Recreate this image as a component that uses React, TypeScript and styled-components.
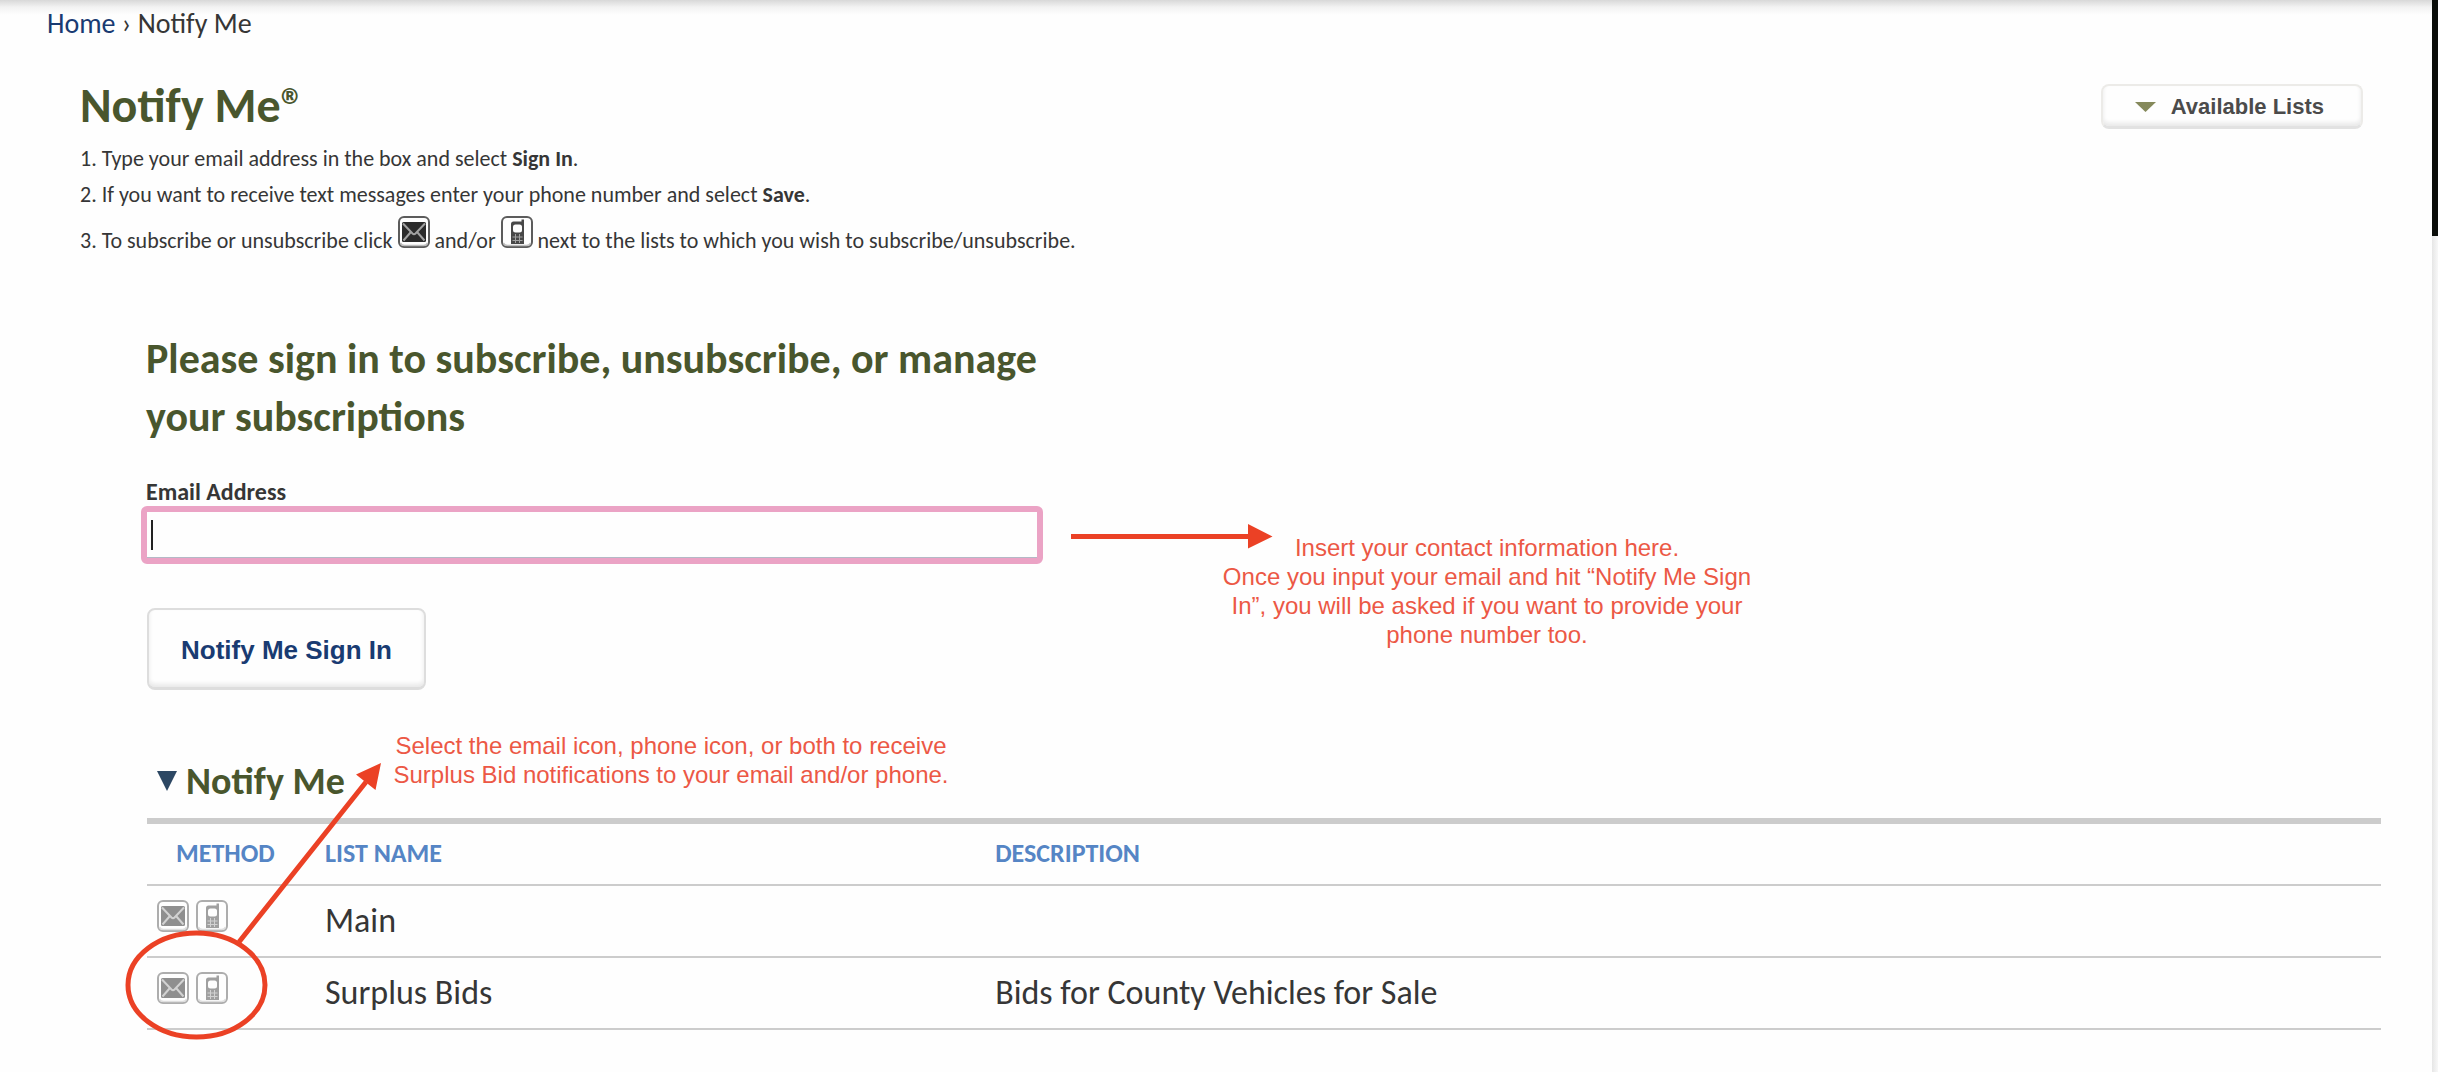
import React from "react";
import styled, { createGlobalStyle } from "styled-components";

const GlobalStyle = createGlobalStyle`
  *, *::before, *::after { box-sizing: border-box; }
  body {
    margin: 0;
    background: #fefefe;
    color: #363636;
    font-family: Carlito, Lato, sans-serif;
  }
  h1, h2, h3, p, ol { margin: 0; padding: 0; }
`;

const colors = {
  olive: "#49562d",
  navy: "#193b72",
  blue: "#5585c5",
  rule: "#cccccc",
  pink: "#eba3c5",
  arrow: "#eb4125",
  note: "#ec5845",
};

const Page = styled.div`
  display: flex;
  min-height: 100vh;
  position: relative;
  overflow: hidden;
`;

const Content = styled.div`
  flex: 1;
  min-width: 0;
  padding: 0 51px 40px 0;
  background: linear-gradient(#d8d8d8, #f2f2f2 7px, #fefefe 15px);
`;

const Edge = styled.div`
  width: 6px;
  display: flex;
  flex-direction: column;
  background: linear-gradient(90deg, #e6e6e6, #f8f8f8);
`;

const EdgePhoto = styled.div`
  height: 236px;
  background: #0a0d09;
`;

const Breadcrumb = styled.nav`
  padding: 9px 0 0 47px;
  font-size: 28px;
  line-height: 30px;
`;

const HomeLink = styled.a`
  color: ${colors.navy};
  text-decoration: none;
`;

const Intro = styled.header`
  display: flex;
  justify-content: space-between;
  align-items: flex-start;
  padding: 40px 18px 0 80px;
`;

const Title = styled.h1`
  color: ${colors.olive};
  font-size: 48px;
  line-height: 54px;
  margin-bottom: 8px;
`;

const Steps = styled.ol`
  list-style: none;
  font-size: 22px;
  line-height: 36px;
`;

const StepIcon = styled.svg`
  margin-top: 3px;
  vertical-align: baseline;
`;

const SoftButton = styled.button`
  border: 2px solid #dddddd;
  border-bottom-width: 3px;
  border-radius: 8px;
  background: #fefefe;
  box-shadow: inset 0 -3px 4px #e8e8e8;
  font-family: "Liberation Sans", Arial, sans-serif;
  font-weight: bold;
`;

const ListsButton = styled(SoftButton)`
  display: flex;
  align-items: center;
  gap: 15px;
  margin-top: 5px;
  padding: 2px 37px 0 32px;
  height: 45px;
  border-color: #ecebe8;
  border-bottom-color: #e2e2e2;
  color: #4b4b4b;
  font-size: 22px;
`;

const Main = styled.main`
  padding: 71px 0 0 147px;
`;

const SignIn = styled.form`
  width: 40%;
  min-width: 900px;
  margin-left: -1px;
`;

const FormTitle = styled.h2`
  color: ${colors.olive};
  font-size: 42px;
  line-height: 58px;
  margin-bottom: 32px;
`;

const Label = styled.label`
  display: block;
  font-size: 24px;
  font-weight: bold;
  line-height: 28px;
`;

const Field = styled.div`
  position: relative;
  margin: 0 0 44px -5px;
  height: 58px;
`;

const Input = styled.input`
  display: block;
  width: 902px;
  height: 58px;
  padding: 0 6px;
  border: 6px solid ${colors.pink};
  border-radius: 6px;
  outline: none;
  background: #fefefe;
  box-shadow: inset 0 -1px 0 #b4b9c6;
  font-size: 28px;
`;

const Caret = styled.span`
  position: absolute;
  left: 10px;
  top: 14px;
  width: 2px;
  height: 30px;
  background: #222222;
`;

const SignInButton = styled(SoftButton)`
  display: block;
  height: 82px;
  margin-left: 1px;
  padding: 4px 32px 0;
  color: ${colors.navy};
  font-size: 26px;
`;

const GroupTitle = styled.h3`
  display: flex;
  align-items: center;
  gap: 9px;
  margin: 69px 0 15px;
  padding-left: 10px;
  color: ${colors.olive};
  font-size: 38px;
  line-height: 44px;
`;

const Table = styled.table`
  width: 100%;
  table-layout: fixed;
  border-collapse: separate;
  border-spacing: 0;
  border-top: 6px solid ${colors.rule};
`;

const HeadCell = styled.th<{ $width: string; $indent?: number }>`
  width: ${(p) => p.$width};
  height: 62px;
  padding: 0 0 2px ${(p) => p.$indent ?? 0}px;
  border-bottom: 2px solid ${colors.rule};
  color: ${colors.blue};
  font-size: 26px;
  line-height: 30px;
  text-align: left;
  text-transform: uppercase;
`;

const Cell = styled.td`
  height: 72px;
  padding: 0;
  border-bottom: 2px solid ${colors.rule};
  font-size: 34px;
  line-height: 40px;
`;

const Methods = styled.div`
  display: flex;
  gap: 7px;
  padding: 0 0 10px 10px;
`;

const MethodButton = styled.button`
  display: block;
  width: 32px;
  height: 32px;
  padding: 0;
  border: 0;
  background: none;
`;

const Note = styled.p<{ $left: number; $top: number; $width: number }>`
  position: absolute;
  left: ${(p) => p.$left}px;
  top: ${(p) => p.$top}px;
  width: ${(p) => p.$width}px;
  color: ${colors.note};
  font-family: "Liberation Sans", Arial, sans-serif;
  font-size: 24px;
  line-height: 29px;
  text-align: center;
`;

const Marks = styled.svg`
  position: absolute;
  left: 0;
  top: 0;
  pointer-events: none;
`;

type IconTone = { frame: string; corner: string; fill: string; body: string; line: string };
const dark: IconTone = { frame: "#5c5c5c", corner: "#bdbdbd", fill: "#2b2b2b", body: "#484848", line: "#a2a2a2" };
const faded: IconTone = { frame: "#adadad", corner: "#dedede", fill: "#8f8f8f", body: "#a0a0a0", line: "#d2d2d2" };

function Frame({ tone }: { tone: IconTone }) {
  return (
    <>
      <rect x="1" y="1" width="30" height="30" rx="5" fill="#fefefe" stroke={tone.frame} strokeWidth="2" />
      <path d="M2.500 27q1 2.500 4 2.500h19q3 0 4-2.500" fill="none" stroke={tone.corner} strokeWidth="1.500" />
    </>
  );
}

function MailDrawing({ tone }: { tone: IconTone }) {
  return (
    <>
      <Frame tone={tone} />
      <rect x="4" y="6" width="24" height="20" rx="1.500" fill={tone.fill} />
      <path
        d="M5 7.500l9.500 10q1.500 1.500 3 0l9.500-10M5.500 24.500l7-8M26.500 24.500l-7-8"
        fill="none"
        stroke={tone.line}
        strokeWidth="2"
      />
    </>
  );
}

function PhoneDrawing({ tone }: { tone: IconTone }) {
  return (
    <>
      <Frame tone={tone} />
      <path d="M20.500 3.500h2.500v24.500h-13v-20q0-2.500 2.500-2.500h8z" fill={tone.body} />
      <rect x="12" y="8.500" width="9" height="8" rx="2.500" fill="#fefefe" />
      <path d="M11.500 21h10M11.500 24.500h10M14.500 18v9M18.500 18v9" stroke={tone.line} strokeWidth="1" />
    </>
  );
}

const lists = [
  { name: "Main", description: "" },
  { name: "Surplus Bids", description: "Bids for County Vehicles for Sale" },
];

export default function App() {
  return (
    <>
      <GlobalStyle />
      <Page>
        <Content>
          <Breadcrumb aria-label="Breadcrumb">
            <HomeLink href="#home">Home</HomeLink> › Notify Me
          </Breadcrumb>
          <Intro>
            <div>
              <Title>Notify Me®</Title>
              <Steps>
                <li>
                  1. Type your email address in the box and select <b>Sign In</b>.
                </li>
                <li>
                  2. If you want to receive text messages enter your phone number and select <b>Save</b>.
                </li>
                <li>
                  3. To subscribe or unsubscribe click{" "}
                  <StepIcon width="32" height="32" viewBox="0 0 32 32" role="img" aria-label="email">
                    <MailDrawing tone={dark} />
                  </StepIcon>{" "}
                  and/or{" "}
                  <StepIcon width="32" height="32" viewBox="0 0 32 32" role="img" aria-label="phone">
                    <PhoneDrawing tone={dark} />
                  </StepIcon>{" "}
                  next to the lists to which you wish to subscribe/unsubscribe.
                </li>
              </Steps>
            </div>
            <ListsButton type="button">
              <svg width="21" height="10" viewBox="0 0 21 10" aria-hidden="true">
                <path d="M0 0h21l-10.500 10z" fill="#85895b" />
              </svg>
              Available Lists
            </ListsButton>
          </Intro>
          <Main>
            <SignIn onSubmit={(e) => e.preventDefault()}>
              <FormTitle>Please sign in to subscribe, unsubscribe, or manage your subscriptions</FormTitle>
              <Label htmlFor="email">Email Address</Label>
              <Field>
                <Input id="email" type="email" />
                <Caret />
              </Field>
              <SignInButton type="submit">Notify Me Sign In</SignInButton>
            </SignIn>
            <GroupTitle>
              <svg width="20" height="20" viewBox="0 0 20 20" aria-hidden="true">
                <path d="M0 0h20l-10 20z" fill="#2c4763" />
              </svg>
              Notify Me
            </GroupTitle>
            <Table>
              <thead>
                <tr>
                  <HeadCell $width="178px" $indent={29}>Method</HeadCell>
                  <HeadCell $width="30%">List Name</HeadCell>
                  <HeadCell $width="auto">Description</HeadCell>
                </tr>
              </thead>
              <tbody>
                {lists.map((list) => (
                  <tr key={list.name}>
                    <Cell>
                      <Methods>
                        <MethodButton type="button" aria-label={`Email ${list.name}`}>
                          <svg width="32" height="32" viewBox="0 0 32 32" aria-hidden="true">
                            <MailDrawing tone={faded} />
                          </svg>
                        </MethodButton>
                        <MethodButton type="button" aria-label={`Text ${list.name}`}>
                          <svg width="32" height="32" viewBox="0 0 32 32" aria-hidden="true">
                            <PhoneDrawing tone={faded} />
                          </svg>
                        </MethodButton>
                      </Methods>
                    </Cell>
                    <Cell>{list.name}</Cell>
                    <Cell>{list.description}</Cell>
                  </tr>
                ))}
              </tbody>
            </Table>
          </Main>
        </Content>
        <Edge>
          <EdgePhoto />
        </Edge>
        <Note $left={1212} $top={533} $width={550}>
          Insert your contact information here.
          <br />
          Once you input your email and hit “Notify Me Sign In”, you will be asked if you want to provide your phone
          number too.
        </Note>
        <Note $left={386} $top={731} $width={570}>
          Select the email icon, phone icon, or both to receive Surplus Bid notifications to your email and/or phone.
        </Note>
        <Marks width="1300" height="1060" viewBox="0 0 1300 1060" aria-hidden="true">
          <g fill="none" stroke={colors.arrow} strokeWidth="5">
            <path d="M1071 536.500h180M239 942L366 782" />
            <ellipse cx="196.500" cy="985" rx="68.500" ry="52" />
          </g>
          <path d="M1248 524l24.500 12.500-24.500 12zM381 763l-25 11.500 19.500 15.500z" fill={colors.arrow} />
        </Marks>
      </Page>
    </>
  );
}
